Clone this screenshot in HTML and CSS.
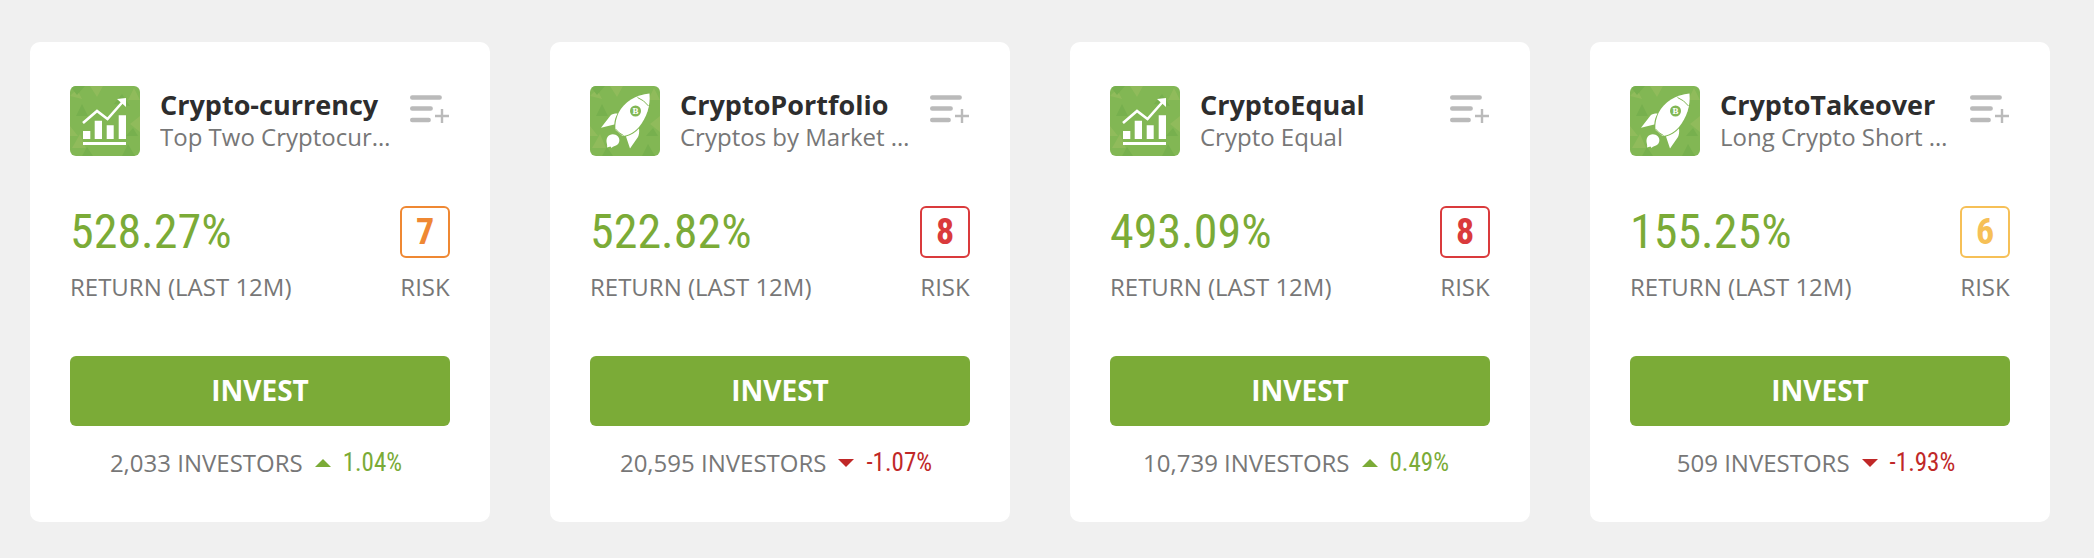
FILE: index.html
```html
<!DOCTYPE html>
<html lang="en">
<head>
  <meta charset="UTF-8">
  <meta name="viewport" content="width=device-width, initial-scale=1">
  <title>Crypto portfolios</title>
  <link rel="stylesheet" href="styles.css">
</head>
<body>
  <!-- Shared icons -->
  <svg class="sprite" aria-hidden="true">
    <symbol id="tile" viewBox="0 0 70 70">
      <rect width="70" height="70" fill="#82b754"/>
      <path fill="#90bb5b" d="M20 0h13l-6 11zM0 10l7-7 5 10zM58 14l6-12 6 12zM0 40l8 10H0zM2 62l8-14 6 14zM60 38l10-8v16z"/>
      <path fill="#77b04e" d="M0 0h15L7 9zM44 18l8-10 8 12zM6 30l6-12 6 12zM52 70l6-12 7 12zM12 70l5-9 6 9zM56 50l7-8 5 8z"/>
    </symbol>
    <symbol id="chart" viewBox="0 0 70 70">
      <use href="#tile"/>
      <path fill="none" stroke="#fff" stroke-width="2.6" d="M13 37l14-12 10.5 8L53 15.500"/>
      <path fill="#fff" d="M47 13l9-1v9zM13 45h7.300v8H13zM24.700 34.700H32V53h-7.300zM36.700 39.300h7V53h-7zM48.700 29.300H56V53h-7.300zM13 56h43v3H13z"/>
    </symbol>
    <symbol id="rocket" viewBox="0 0 70 70">
      <use href="#tile"/>
      <path fill="#fff" d="M59.500 7.500C46 8.500 34 16 28.500 27C25.500 34 25 39 25.500 44L32.500 50C38 49.500 44 46.500 49 41C57 31 60.500 20 59.500 7.500z"/>
      <path fill="#fff" d="M27.500 27.500C24 27.500 22 28 20.500 29.500L11 41.700L24.300 38.500C24.500 34.500 25.500 31 27.500 27.500zM36 50.500C41 49 45.500 46.500 49 42.500C49.500 46 49 49 48 51L40 62.500z"/>
      <path fill="#fff" d="M17.500 51C20 47.500 25 47.500 28 50.500C30.500 53.500 29.500 58 26 59.500C24 60.500 23 60.500 21.500 62L20.500 60.500L17 61.500C18 58.500 15 55.500 17.500 51z"/>
      <path fill="none" stroke="#82b754" stroke-width="1" d="M47.500 11.500Q54 14 58.500 20M25.500 43Q29 47.500 33.500 49.500"/>
      <circle cx="45.500" cy="25" r="5.500" fill="#82b754"/>
      <text class="coin" x="45.500" y="28" text-anchor="middle">B</text>
    </symbol>
    <symbol id="add-list" viewBox="1 0 40 30">
      <path fill="none" stroke="#bababa" stroke-width="4.400" stroke-linecap="round" d="M3.200 3.500h27.500M3.200 14.500h18.500M3.200 26h16.500"/>
      <path fill="none" stroke="#bababa" stroke-width="2.400" d="M26 22h14M33 15v14"/>
    </symbol>
  </svg>

  <main class="portfolios">
    <article class="card">
      <header class="card-head">
        <svg class="avatar" aria-hidden="true"><use href="#chart"/></svg>
        <div class="names">
          <h2>Crypto-currency</h2>
          <p>Top Two Cryptocurrencies</p>
        </div>
        <button class="add" type="button" aria-label="Add to list"><svg><use href="#add-list"/></svg></button>
      </header>
      <div class="stats">
        <div class="stat"><span class="gain">528.27%</span><span class="label">RETURN (LAST 12M)</span></div>
        <div class="stat right"><span class="risk orange">7</span><span class="label">RISK</span></div>
      </div>
      <button class="invest" type="button">INVEST</button>
      <p class="investors">2,033 INVESTORS <span class="change up">1.04%</span></p>
    </article>

    <article class="card">
      <header class="card-head">
        <svg class="avatar" aria-hidden="true"><use href="#rocket"/></svg>
        <div class="names">
          <h2>CryptoPortfolio</h2>
          <p>Cryptos by Market Cap</p>
        </div>
        <button class="add" type="button" aria-label="Add to list"><svg><use href="#add-list"/></svg></button>
      </header>
      <div class="stats">
        <div class="stat"><span class="gain">522.82%</span><span class="label">RETURN (LAST 12M)</span></div>
        <div class="stat right"><span class="risk red">8</span><span class="label">RISK</span></div>
      </div>
      <button class="invest" type="button">INVEST</button>
      <p class="investors">20,595 INVESTORS <span class="change down">-1.07%</span></p>
    </article>

    <article class="card">
      <header class="card-head">
        <svg class="avatar" aria-hidden="true"><use href="#chart"/></svg>
        <div class="names">
          <h2>CryptoEqual</h2>
          <p>Crypto Equal</p>
        </div>
        <button class="add" type="button" aria-label="Add to list"><svg><use href="#add-list"/></svg></button>
      </header>
      <div class="stats">
        <div class="stat"><span class="gain">493.09%</span><span class="label">RETURN (LAST 12M)</span></div>
        <div class="stat right"><span class="risk red">8</span><span class="label">RISK</span></div>
      </div>
      <button class="invest" type="button">INVEST</button>
      <p class="investors">10,739 INVESTORS <span class="change up">0.49%</span></p>
    </article>

    <article class="card">
      <header class="card-head">
        <svg class="avatar" aria-hidden="true"><use href="#rocket"/></svg>
        <div class="names">
          <h2>CryptoTakeover</h2>
          <p>Long Crypto Short Fiat</p>
        </div>
        <button class="add" type="button" aria-label="Add to list"><svg><use href="#add-list"/></svg></button>
      </header>
      <div class="stats">
        <div class="stat"><span class="gain">155.25%</span><span class="label">RETURN (LAST 12M)</span></div>
        <div class="stat right"><span class="risk yellow">6</span><span class="label">RISK</span></div>
      </div>
      <button class="invest" type="button">INVEST</button>
      <p class="investors">509 INVESTORS <span class="change down">-1.93%</span></p>
    </article>
  </main>
</body>
</html>
```
FILE: styles.css
```css
* {
  box-sizing: border-box;
}
body {
  margin: 0;
  background-color: #f0f0f0;
  color: #777;
  font-family: "Open Sans", sans-serif;
  font-size: 24px;
  line-height: 32px;
}
h2, p {
  margin: 0;
}
button {
  border: none;
  font-family: inherit;
  cursor: pointer;
}
.sprite {
  display: none;
}
.coin {
  font-family: "Liberation Serif", serif;
  font-size: 9px;
  font-weight: bold;
  fill: #fff;
}
.portfolios {
  display: grid;
  grid-template-columns: repeat(4, minmax(0, 1fr));
  gap: 60px;
  padding: 42px 44px 36px 30px;
}
.card {
  background-color: #fff;
  border-radius: 10px;
  padding: 44px 40px 43px;
}

/* Header */
.card-head {
  display: flex;
  align-items: center;
}
.avatar {
  flex: none;
  width: 70px;
  height: 70px;
  border-radius: 6px;
}
.names {
  flex: 1;
  min-width: 0;
  margin: 0 14px 0 20px;
}
.names h2 {
  color: #2d2d2d;
  font-size: 27px;
  line-height: 32px;
  white-space: nowrap;
}
.names p {
  overflow: hidden;
  text-overflow: ellipsis;
  white-space: nowrap;
}
.add {
  align-self: flex-start;
  margin-top: 8px;
  padding: 0;
  background: none;
}
.add svg {
  display: block;
  width: 40px;
  height: 30px;
}

/* Return and risk */
.stats {
  display: flex;
  justify-content: space-between;
  margin: 50px 0 53px;
}
.stat {
  display: flex;
  flex-direction: column;
  gap: 13px;
}
.right {
  align-items: center;
}
.gain, .risk, .change {
  font-family: "Roboto Condensed", "Liberation Sans Narrow", Roboto, sans-serif;
}
.gain {
  color: #7bab37;
  font-size: 48px;
  line-height: 52px;
}
.risk {
  width: 50px;
  height: 52px;
  border: 2px solid;
  border-radius: 6px;
  font-size: 36px;
  font-weight: bold;
  line-height: 48px;
  text-align: center;
}
.orange { color: #ef8833; }
.red { color: #da3a3c; }
.yellow { color: #f6c057; }

.invest {
  display: block;
  width: 100%;
  height: 70px;
  padding: 0 0 3px;
  border-radius: 6px;
  background-color: #7bab37;
  color: #fff;
  font-size: 28px;
  font-weight: bold;
}

/* Investors */
.investors {
  display: flex;
  justify-content: center;
  gap: 12px;
  margin-top: 21px;
  padding-right: 8px;
}
.change {
  display: flex;
  align-items: center;
  gap: 12px;
  font-size: 25px;
}
.change::before {
  content: "";
  border: 8px solid transparent;
}
.up {
  color: #7bab37;
}
.up::before {
  border-top: none;
  border-bottom-color: #7bab37;
}
.down {
  color: #c02828;
}
.down::before {
  border-bottom: none;
  border-top-color: #c02828;
}
```
